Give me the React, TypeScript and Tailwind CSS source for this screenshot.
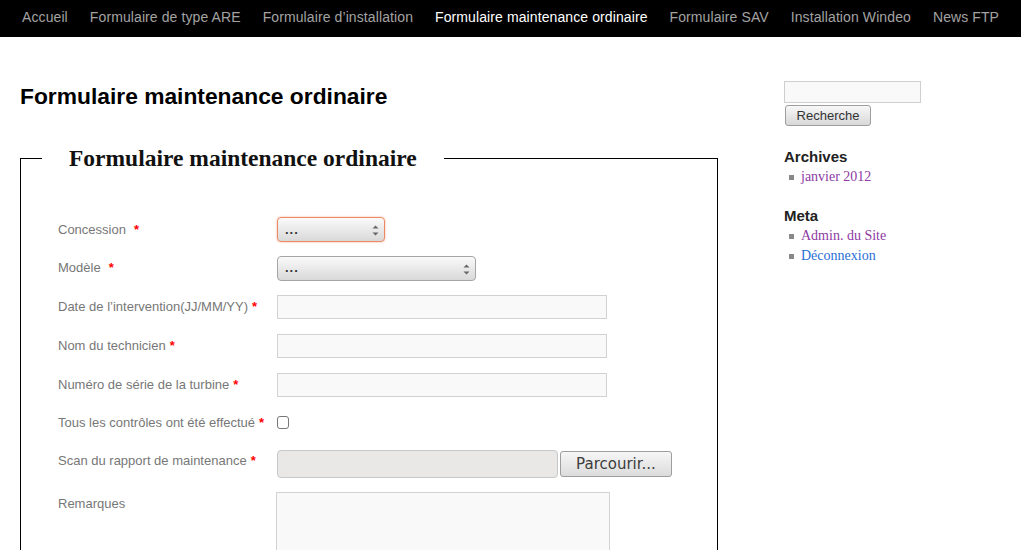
const navItems = [
  'Accueil',
  'Formulaire de type ARE',
  'Formulaire d’installation',
  'Formulaire maintenance ordinaire',
  'Formulaire SAV',
  'Installation Windeo',
  'News FTP',
];

function Req({ wide }: { wide?: boolean }) {
  return (
    <span className={`${wide ? 'ml-[8px]' : 'ml-[4px]'} font-bold text-[#ff0000]`}>
      *
    </span>
  );
}

function SelectBox({ width, focused }: { width: string; focused?: boolean }) {
  return (
    <div
      className={`relative flex h-[25px] items-center rounded-[4px] border bg-gradient-to-b from-[#fafafa] to-[#d9d9d9] pl-[7px] text-[13px] font-bold text-[#333] ${width} ${
        focused
          ? 'border-[#ec8a63] shadow-[0_0_2px_#f0a080]'
          : 'border-[#a5a5a5]'
      }`}
    >
      <span className="tracking-[1px]">...</span>
      <svg
        className="absolute right-[5px] top-[7px]"
        width="7"
        height="11"
        viewBox="0 0 7 11"
      >
        <path d="M3.5 0.5 L6.5 3.5 L0.5 3.5 Z" fill="#666" />
        <path d="M0.5 7.5 L6.5 7.5 L3.5 10.5 Z" fill="#666" />
      </svg>
    </div>
  );
}

function TextField() {
  return (
    <div className="h-[24px] w-[330px] border border-[#d2d2d2] bg-[#f9f9f9]" />
  );
}

function Row({
  label,
  required,
  wide,
  h,
  children,
}: {
  label: string;
  required?: boolean;
  wide?: boolean;
  h: string;
  children: React.ReactNode;
}) {
  return (
    <div className={`flex items-center ${h}`}>
      <div className="w-[219px] shrink-0 text-[13px] text-[#777]">
        {label}
        {required && <Req wide={wide} />}
      </div>
      {children}
    </div>
  );
}

export default function App() {
  return (
    <div className="h-[550px] overflow-hidden bg-white font-['Liberation_Sans',Arial,sans-serif]">
      {/* menu */}
      <nav className="flex h-[37px] items-center bg-black pl-[11px] pb-[3px]">
        {navItems.map((item) => (
          <span
            key={item}
            className={`px-[11px] text-[14px] tracking-[0.1px] ${
              item === 'Formulaire maintenance ordinaire'
                ? 'text-white'
                : 'text-[#a3a3a3]'
            }`}
          >
            {item}
          </span>
        ))}
      </nav>

      <div className="flex">
        {/* contenu */}
        <main className="ml-[20px] w-[698px] shrink-0">
          <h1 className="mt-[45px] text-[22.8px] leading-[28px] font-bold text-black">
            Formulaire maintenance ordinaire
          </h1>

          <fieldset className="mt-[35px] border border-black pb-[40px]">
            <legend className="ml-[21px] px-[27px] font-['Liberation_Serif',serif] text-[23.5px] leading-[26px] font-bold text-[#111]">
              Formulaire maintenance ordinaire
            </legend>

            <div className="mt-[39px] pl-[37px]">
              <Row label="Concession" required wide h="h-[39px]">
                <SelectBox width="w-[108px]" focused />
              </Row>
              <Row label="Modèle" required wide h="h-[38px]">
                <SelectBox width="w-[199px]" />
              </Row>
              <Row label="Date de l’intervention(JJ/MM/YY)" required h="h-[39px]">
                <TextField />
              </Row>
              <Row label="Nom du technicien" required h="h-[39px]">
                <TextField />
              </Row>
              <Row label="Numéro de série de la turbine" required h="h-[39px]">
                <TextField />
              </Row>
              <Row label="Tous les contrôles ont été effectué" required h="h-[37px]">
                <div className="h-[13px] w-[12px] rounded-[3px] border border-[#777] bg-white" />
              </Row>
              <div className="flex h-[47px] items-start pt-[10px]">
                <div className="w-[219px] shrink-0 text-[13px] text-[#777]">
                  Scan du rapport de maintenance
                  <Req />
                </div>
                <div className="flex -mt-[1px] items-center gap-[2px]">
                  <div className="h-[28px] w-[281px] rounded-[4px] border border-[#c8c8c8] bg-[#e9e8e7]" />
                  <div className="flex h-[26px] w-[112px] items-center justify-center rounded-[3px] border border-[#9e9e9e] bg-gradient-to-b from-[#f6f6f6] to-[#dcdcdc] font-['DejaVu_Sans',sans-serif] text-[15px] text-[#3c3c3c]">
                    Parcourir...
                  </div>
                </div>
              </div>
              <div className="flex items-start pt-[4px]">
                <div className="w-[218px] shrink-0 pt-[2px] text-[13px] text-[#777]">
                  Remarques
                </div>
                <div className="h-[90px] w-[334px] border border-[#d2d2d2] bg-[#f9f9f9]" />
              </div>
            </div>
          </fieldset>
        </main>

        {/* barre latérale */}
        <aside className="ml-[66px] pt-[44px]">
          <div className="h-[22px] w-[137px] border border-[#cfcfcf] bg-[#f9f9f9]" />
          <div className="mt-[2px] ml-[1px] flex h-[21px] w-[86px] items-center justify-center rounded-[3px] border border-[#9e9e9e] bg-gradient-to-b from-[#f8f8f8] to-[#d8d8d8] text-[13px] text-[#333]">
            Recherche
          </div>

          <h3 className="mt-[21px] text-[15px] leading-[20px] font-bold text-[#222]">
            Archives
          </h3>
          <ul className="font-['Liberation_Serif',serif] text-[14px] leading-[20px]">
            <li className="flex items-center">
              <span className="ml-[5px] mr-[7px] h-[5px] w-[5px] bg-[#888]" />
              <span className="text-[#8e3aa3]">janvier 2012</span>
            </li>
          </ul>

          <h3 className="mt-[19px] text-[15px] leading-[20px] font-bold text-[#222]">
            Meta
          </h3>
          <ul className="font-['Liberation_Serif',serif] text-[14px] leading-[20px]">
            <li className="flex items-center">
              <span className="ml-[5px] mr-[7px] h-[5px] w-[5px] bg-[#888]" />
              <span className="text-[#8e3aa3]">Admin. du Site</span>
            </li>
            <li className="flex items-center">
              <span className="ml-[5px] mr-[7px] h-[5px] w-[5px] bg-[#888]" />
              <span className="text-[#2a6fd6]">Déconnexion</span>
            </li>
          </ul>
        </aside>
      </div>
    </div>
  );
}
